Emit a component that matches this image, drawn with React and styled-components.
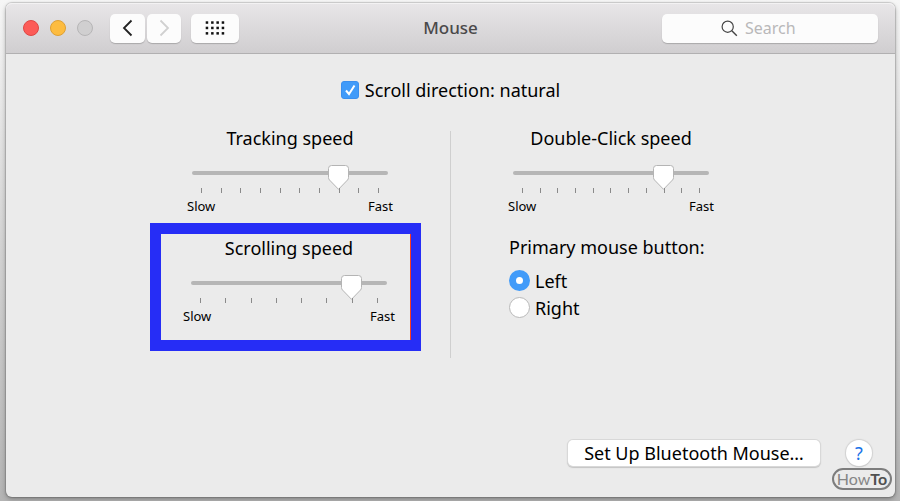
import { useState } from "react";
import styled, { createGlobalStyle } from "styled-components";

const App = () => {
  const [natural, setNatural] = useState(true);
  const [primary, setPrimary] = useState("left");

  return (
    <>
      <GlobalStyle />
      <Window>
        <TitleBar>
          <Controls>
            <Lights>
              <Light aria-label="Close" $color="#fc5b57" $edge="#de4744" />
              <Light aria-label="Minimize" $color="#fdbc40" $edge="#dea034" />
              <Light aria-label="Zoom" $color="#d0cfd0" $edge="#b6b5b6" />
            </Lights>
            <NavButtons>
              <BarButton aria-label="Back" $width={35}>
                <Chevron d="M9.5 1.5 2 9l7.500 7.500" color="#222" />
              </BarButton>
              <BarButton aria-label="Forward" $width={34} disabled>
                <Chevron d="M2.500 1.500 10 9l-7.500 7.500" color="#d0d0d0" />
              </BarButton>
            </NavButtons>
            <BarButton aria-label="Show all" $width={48}>
              <GridIcon />
            </BarButton>
          </Controls>
          <Title>Mouse</Title>
          <SearchBox>
            <SearchIcon />
            <SearchInput aria-label="Search" placeholder="Search" type="text" />
          </SearchBox>
        </TitleBar>
        <Content>
          <CheckLabel>
            <Checkbox
              checked={natural}
              onChange={(e) => setNatural(e.target.checked)}
              type="checkbox"
            />
            <CheckMark viewBox="0 0 18 18">
              <path d="M5 9.5 8 13l5.5-8.5" />
            </CheckMark>
            Scroll direction: natural
          </CheckLabel>
          <Columns>
            <Column>
              <SpeedSlider id="tracking" label="Tracking speed" start={7} steps={10} />
              <Highlight>
                <SpeedSlider
                  id="scrolling"
                  label="Scrolling speed"
                  start={6}
                  steps={8}
                  width={212}
                />
              </Highlight>
            </Column>
            <Divider />
            <Column>
              <SpeedSlider
                id="double-click"
                label="Double-Click speed"
                start={8}
                steps={11}
              />
              <RadioGroup>
                <Legend>Primary mouse button:</Legend>
                <RadioLabel>
                  <Radio
                    checked={primary === "left"}
                    name="primary"
                    onChange={() => setPrimary("left")}
                    type="radio"
                  />
                  Left
                </RadioLabel>
                <RadioLabel>
                  <Radio
                    checked={primary === "right"}
                    name="primary"
                    onChange={() => setPrimary("right")}
                    type="radio"
                  />
                  Right
                </RadioLabel>
              </RadioGroup>
            </Column>
          </Columns>
          <Footer>
            <SetupButton>Set Up Bluetooth Mouse…</SetupButton>
            <HelpButton aria-label="Help">?</HelpButton>
          </Footer>
        </Content>
        <Watermark>
          How<b>To</b>
        </Watermark>
      </Window>
    </>
  );
};

const SpeedSlider = ({ id, label, start, steps, width = 206 }) => {
  const [value, setValue] = useState(start);

  return (
    <SliderGroup $width={width}>
      <SliderTitle htmlFor={id}>{label}</SliderTitle>
      <Range
        id={id}
        max={steps - 1}
        min={0}
        onChange={(e) => setValue(Number(e.target.value))}
        type="range"
        value={value}
      />
      <Ticks>
        {Array.from({ length: steps }, (_, i) => (
          <Tick key={i} />
        ))}
      </Ticks>
      <Ends>
        <span>Slow</span>
        <span>Fast</span>
      </Ends>
    </SliderGroup>
  );
};

const Chevron = ({ d, color }) => (
  <svg width="12" height="18" viewBox="0 0 12 18" fill="none">
    <path d={d} stroke={color} strokeWidth="1.8" />
  </svg>
);

const GridIcon = () => (
  <svg width="20" height="14" viewBox="0 0 20 14" fill="#111">
    {[0.3, 5.7, 11.1].map((y) =>
      [0.7, 6.1, 11.4, 16.7].map((x) => (
        <rect key={`${x}-${y}`} x={x} y={y} width="2.5" height="2.5" />
      ))
    )}
  </svg>
);

const SearchIcon = () => (
  <svg width="17" height="17" viewBox="0 0 17 17" fill="none" stroke="#444">
    <circle cx="6.7" cy="6.7" r="5.6" strokeWidth="1.2" />
    <path d="m10.8 10.8 5 5" strokeWidth="1.4" />
  </svg>
);

const thumb = encodeURIComponent(
  `<svg xmlns="http://www.w3.org/2000/svg" width="21" height="25" viewBox="0 0 21 25">
    <path d="M3.500 .5h14q3 0 3 3v9q0 1.500-1 2.500l-9 9.300-9-9.300q-1-1-1-2.500v-9q0-3 3-3z" fill="#fff" stroke="#b4b4b4"/>
  </svg>`
);

const GlobalStyle = createGlobalStyle`
  * {
    box-sizing: border-box;
  }
  body {
    margin: 0;
    background: linear-gradient(#f6f6f6, #d2d2d2 50%, #b4b4b4);
    color: #000;
    font-family: "Noto Sans", "Open Sans", sans-serif;
    font-size: 18px;
    line-height: 24px;
  }
  #root {
    display: flex;
    min-height: 100vh;
    padding: 3px 5px 4px 6px;
  }
  button,
  input {
    margin: 0;
    padding: 0;
    border: 0;
    font: inherit;
  }
`;

const Window = styled.main`
  position: relative;
  display: flex;
  flex: 1;
  flex-direction: column;
  border-radius: 6px;
  background: #ebebeb;
  box-shadow: 0 0 1px 1px rgba(0, 0, 0, 0.15), 0 2px 5px rgba(0, 0, 0, 0.3);
`;

const TitleBar = styled.header`
  display: grid;
  grid-template-columns: 1fr auto 1fr;
  align-items: center;
  height: 51px;
  padding: 0 17px;
  border-bottom: 1px solid #b1b0b1;
  border-radius: 6px 6px 0 0;
  background: linear-gradient(#e8e6e8, #d0ced0);
  box-shadow: inset 0 1px #f3f2f3;
`;

const Controls = styled.div`
  display: flex;
  align-items: center;
  gap: 10px;
`;

const Lights = styled.div`
  display: flex;
  gap: 11px;
  margin-right: 7px;
`;

const Light = styled.button`
  width: 16px;
  height: 16px;
  border: 1px solid ${({ $edge }) => $edge};
  border-radius: 50%;
  background: ${({ $color }) => $color};
`;

const NavButtons = styled.div`
  display: flex;
  gap: 2px;
`;

const BarButton = styled.button`
  display: flex;
  align-items: center;
  justify-content: center;
  width: ${({ $width }) => $width}px;
  height: 29px;
  border-radius: 5px;
  background: #fcfcfc;
  box-shadow: 0 1px 1px rgba(0, 0, 0, 0.2);
`;

const Title = styled.h1`
  margin: 0;
  color: #4a494a;
  font-size: 17px;
  font-weight: 500;
`;

const SearchBox = styled.label`
  display: flex;
  align-items: center;
  justify-content: center;
  justify-self: end;
  gap: 7px;
  width: 216px;
  height: 29px;
  border-radius: 5px;
  background: #fcfcfc;
  box-shadow: 0 1px 1px rgba(0, 0, 0, 0.2);
`;

const SearchInput = styled.input`
  width: 74px;
  background: transparent;
  font-size: 16px;
  outline: none;
  &::placeholder {
    color: #b9b8b9;
  }
`;

const Content = styled.div`
  display: flex;
  flex: 1;
  flex-direction: column;
  align-items: center;
  padding: 24px 23px 31px;
`;

const CheckLabel = styled.label`
  display: grid;
  grid-template-columns: 18px auto;
  align-items: center;
  gap: 6px;
`;

const Checkbox = styled.input`
  grid-area: 1 / 1;
  width: 18px;
  height: 18px;
  border: 1px solid #b5b5b5;
  border-radius: 3px;
  background: #fff;
  appearance: none;
  &:checked {
    border-color: #3b8fee;
    background: #419bf9;
  }
`;

const CheckMark = styled.svg`
  grid-area: 1 / 1;
  width: 18px;
  height: 18px;
  fill: none;
  stroke: #fff;
  stroke-width: 2;
  pointer-events: none;
`;

const Columns = styled.div`
  display: grid;
  grid-template-columns: 320px 1px 320px;
  margin-top: 24px;
`;

const Column = styled.div`
  display: flex;
  flex-direction: column;
`;

const Divider = styled.div`
  margin: 5px 0 -7px;
  background: #cfcfcf;
`;

const SliderGroup = styled.div`
  width: ${({ $width }) => $width}px;
  margin: 0 auto;
`;

const SliderTitle = styled.label`
  display: block;
  text-align: center;
`;

const Range = styled.input`
  display: block;
  width: 196px;
  height: 4px;
  margin: 21px auto 13px;
  border-radius: 2px;
  background: #b6b6b6;
  appearance: none;
  &::-webkit-slider-runnable-track {
    height: 4px;
  }
  &::-webkit-slider-thumb {
    width: 21px;
    height: 25px;
    margin-top: -6px;
    background: url("data:image/svg+xml,${thumb}");
    appearance: none;
  }
`;

const Ticks = styled.div`
  display: flex;
  justify-content: space-between;
  width: 178px;
  margin: 0 auto;
`;

const Tick = styled.span`
  width: 1px;
  height: 5px;
  background: #8a8a8a;
`;

const Ends = styled.div`
  display: flex;
  justify-content: space-between;
  margin-top: 5px;
  font-size: 13px;
  line-height: 16px;
`;

const Highlight = styled.div`
  width: 271px;
  height: 128px;
  margin: 9px 0 0 20px;
  padding: 2px 0 0 6px;
  border: 11px solid #262df6;
  border-right-width: 10px;
  box-shadow: inset -1px 0 0 0 #ff3b1f;
`;

const RadioGroup = styled.fieldset`
  margin: 21px 0 0 58px;
  padding: 0;
  border: 0;
`;

const Legend = styled.legend`
  margin-bottom: 8px;
  padding: 0;
`;

const RadioLabel = styled.label`
  display: flex;
  align-items: center;
  gap: 5px;
  height: 27px;
`;

const Radio = styled.input`
  width: 21px;
  height: 21px;
  border: 1px solid #b9b9b9;
  border-radius: 50%;
  background: #fff;
  appearance: none;
  &:checked {
    border: 7px solid #419bf9;
  }
`;

const Footer = styled.footer`
  display: flex;
  align-items: center;
  align-self: stretch;
  justify-content: flex-end;
  gap: 26px;
  margin-top: auto;
`;

const SetupButton = styled.button`
  width: 252px;
  height: 26px;
  border-radius: 5px;
  background: #fff;
  box-shadow: 0 0 0 1px #d8d8d8, 0 1px 1px 1px #c4c4c4;
`;

const HelpButton = styled.button`
  width: 26px;
  height: 26px;
  border-radius: 50%;
  background: #fff;
  box-shadow: 0 0 1px 1px #d2d2d2, 0 1px 1px #b5b5b5;
  color: #1a73e8;
`;

const Watermark = styled.div`
  position: absolute;
  right: 3px;
  bottom: 7px;
  width: 60px;
  height: 22px;
  border: 2px solid #7d7d7d;
  border-radius: 11px;
  color: #868686;
  font-family: Lato, sans-serif;
  font-size: 16px;
  line-height: 18px;
  text-align: center;
  b {
    color: #505050;
  }
`;

export default App;
